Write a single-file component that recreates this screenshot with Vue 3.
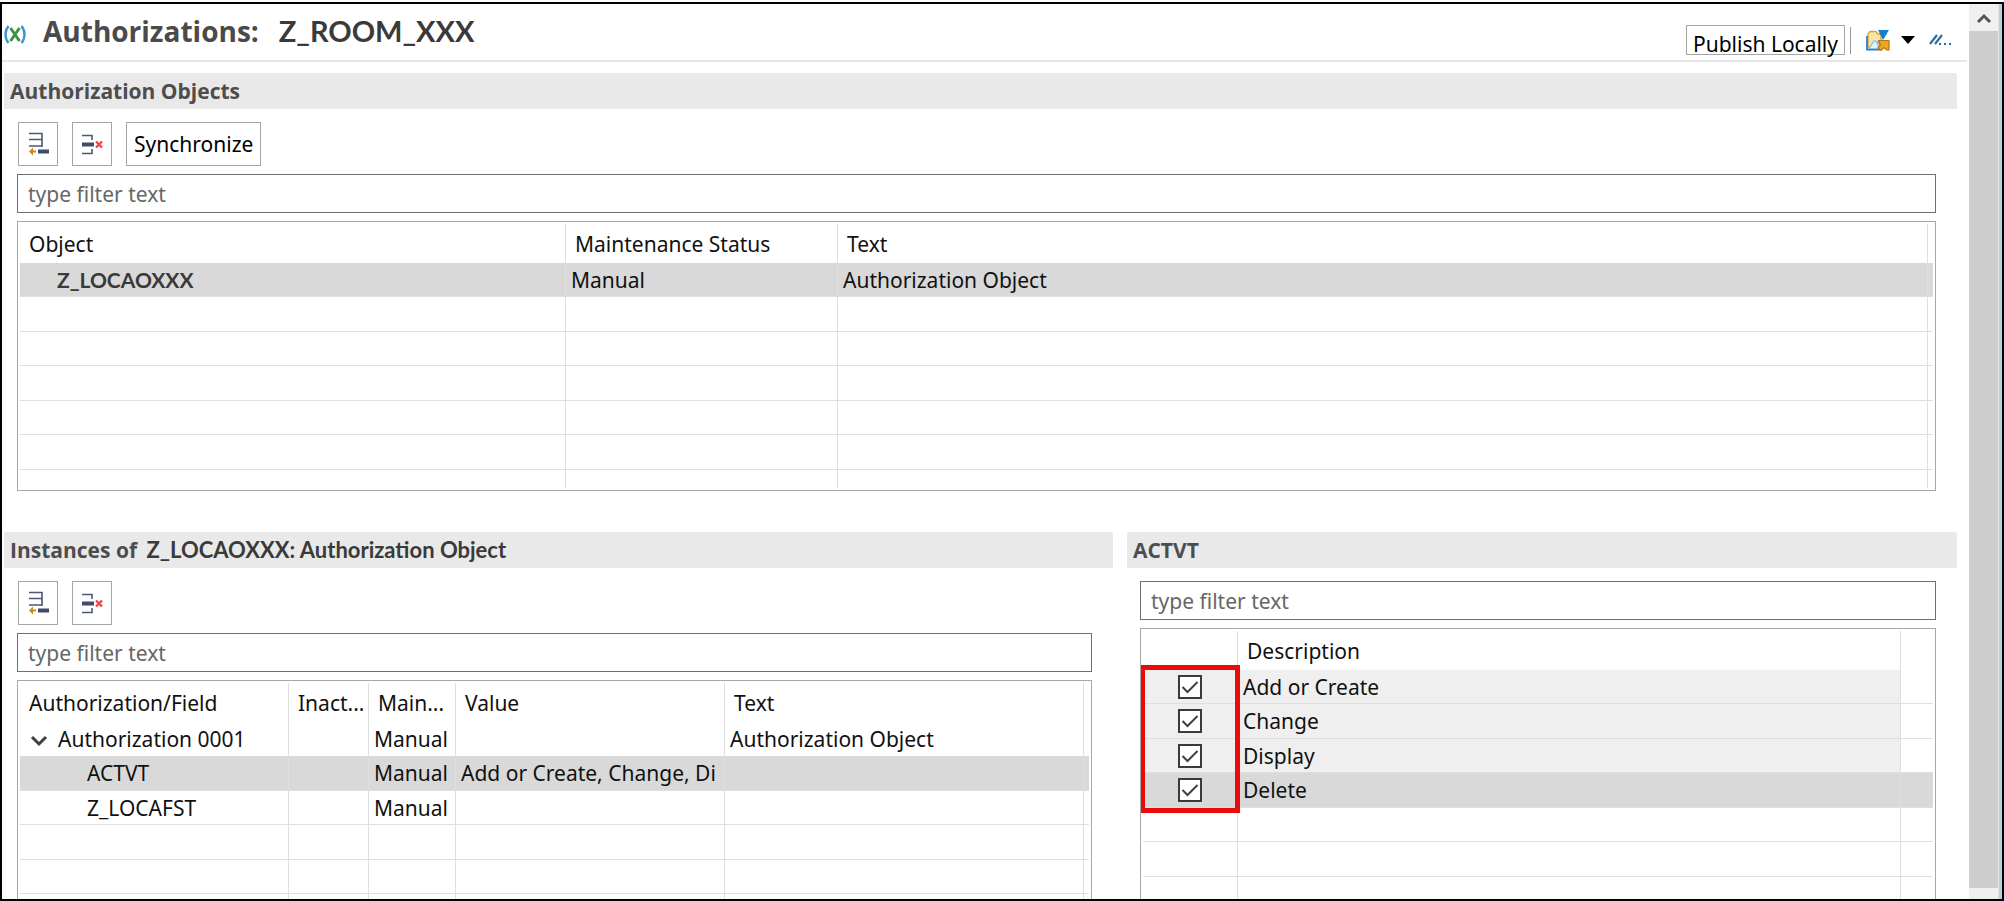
<script setup>
import { ref } from 'vue'

const objects = [
  { name: 'Z_LOCAOXXX', status: 'Manual', text: 'Authorization Object' },
]
const objectFillers = 5

const instances = [
  { name: 'Authorization 0001', level: 0, status: 'Manual', value: '', text: 'Authorization Object' },
  { name: 'ACTVT', level: 1, status: 'Manual', value: 'Add or Create, Change, Di', text: '', selected: true },
  { name: 'Z_LOCAFST', level: 1, status: 'Manual', value: '', text: '' },
]
const instanceFillers = 3

const activities = ref([
  { id: 'create', label: 'Add or Create', checked: true },
  { id: 'change', label: 'Change', checked: true },
  { id: 'display', label: 'Display', checked: true },
  { id: 'delete', label: 'Delete', checked: true, selected: true },
])
const activityFillers = 3
</script>

<template>
  <div class="window">
    <main class="editor">
      <header class="titlebar">
        <svg class="logo" width="22" height="20" viewBox="0 0 22 20" fill="none" aria-hidden="true">
          <path d="M4.500 1C0.500 6 0.500 13 4.500 18M17.500 1C21.500 6 21.500 13 17.500 18" stroke="#3f93d6" stroke-width="2.400" />
          <path d="M6.500 3L15.500 16M15.500 3L6.500 16" stroke="#3c9147" stroke-width="3" />
        </svg>
        <h1>Authorizations:<span class="name">Z_ROOM_XXX</span></h1>
        <div class="actions">
          <button type="button" class="publish">Publish Locally</button>
          <span class="divider"></span>
          <button type="button" class="plain share" aria-label="Share">
            <svg width="24" height="23" viewBox="0 0 24 23" aria-hidden="true">
              <path d="M2 18V5L4 2.500H10L12 5H15V18Z" fill="#fbe3a6" stroke="#d9a441" stroke-width="1.400" />
              <path d="M1 7V20.500H14" fill="none" stroke="#2a84c4" stroke-width="1.800" />
              <path d="M2 19.500L8 11L14 13V19.500Z" fill="#8cc4f0" />
              <path d="M4 19L9 12L13 19Z" fill="#e8f3fc" />
              <path d="M12 1H23L17 11Z" fill="#0f7fd0" />
              <path d="M12.500 11.500H23V21H20.500L18 18.500L15 21.500L12 18.500L14.500 16Z" fill="#efa51c" stroke="#b87708" stroke-width="1.200" />
            </svg>
          </button>
          <button type="button" class="plain menu" aria-label="Share menu">
            <svg width="14" height="8" viewBox="0 0 14 8" aria-hidden="true"><path d="M0 0H14L7 8Z" fill="#000" /></svg>
          </button>
          <button type="button" class="plain" aria-label="More">
            <svg width="23" height="12" viewBox="0 0 23 12" aria-hidden="true">
              <path d="M1 10L8 1M6 10L13 1" stroke="#2f6f9f" stroke-width="2.200" />
              <path d="M10 9h2v2h-2zM15 9h2v2h-2zM20 9h2v2h-2z" fill="#2f6f9f" />
            </svg>
          </button>
        </div>
      </header>

      <section class="objects">
        <h2>Authorization Objects</h2>
        <div class="body">
          <div class="tools">
            <button type="button" class="tool" aria-label="Add object">
              <svg width="22" height="24" viewBox="0 0 22 24" aria-hidden="true">
                <path d="M2 1.500H15V15M2 7.500H15M2 14H15" fill="none" stroke="#4a5875" stroke-width="1.600" />
                <path d="M11 17.500H22V21.500H11Z" fill="#3e4c69" />
                <path d="M2 19.500L6 15.500V18.500H9V20.500H6V23.500Z" fill="#c98a1b" />
              </svg>
            </button>
            <button type="button" class="tool" aria-label="Remove object">
              <svg width="22" height="24" viewBox="0 0 22 24" aria-hidden="true">
                <path d="M1 3.500H11V8M11 17V21.500H1" fill="none" stroke="#4a5875" stroke-width="1.600" />
                <path d="M1 10.500H13V14.500H1Z" fill="#3e4c69" />
                <path d="M15 9.500L21 15.500M21 9.500L15 15.500" stroke="#f0454b" stroke-width="2.400" />
              </svg>
            </button>
            <button type="button" class="tool wide">Synchronize</button>
          </div>
          <input class="filter" type="text" placeholder="type filter text" aria-label="Filter authorization objects" />
          <div class="grid">
            <table>
              <colgroup><col class="c-object" /><col class="c-maint" /><col /><col class="c-tail" /></colgroup>
              <thead>
                <tr><th>Object</th><th>Maintenance Status</th><th>Text</th><th></th></tr>
              </thead>
              <tbody>
                <tr v-for="o in objects" :key="o.name" class="selected">
                  <td class="objname">{{ o.name }}</td><td>{{ o.status }}</td><td>{{ o.text }}</td><td></td>
                </tr>
                <tr v-for="n in objectFillers" :key="n"><td></td><td></td><td></td><td></td></tr>
                <tr class="partial"><td></td><td></td><td></td><td></td></tr>
              </tbody>
            </table>
          </div>
        </div>
      </section>

      <div class="lower">
        <section>
          <h2>Instances of <span class="name">Z_LOCAOXXX: Authorization Object</span></h2>
          <div class="body">
            <div class="tools">
              <button type="button" class="tool" aria-label="Add instance">
                <svg width="22" height="24" viewBox="0 0 22 24" aria-hidden="true">
                  <path d="M2 1.500H15V15M2 7.500H15M2 14H15" fill="none" stroke="#4a5875" stroke-width="1.600" />
                  <path d="M11 17.500H22V21.500H11Z" fill="#3e4c69" />
                  <path d="M2 19.500L6 15.500V18.500H9V20.500H6V23.500Z" fill="#c98a1b" />
                </svg>
              </button>
              <button type="button" class="tool" aria-label="Remove instance">
                <svg width="22" height="24" viewBox="0 0 22 24" aria-hidden="true">
                  <path d="M1 3.500H11V8M11 17V21.500H1" fill="none" stroke="#4a5875" stroke-width="1.600" />
                  <path d="M1 10.500H13V14.500H1Z" fill="#3e4c69" />
                  <path d="M15 9.500L21 15.500M21 9.500L15 15.500" stroke="#f0454b" stroke-width="2.400" />
                </svg>
              </button>
            </div>
            <input class="filter" type="text" placeholder="type filter text" aria-label="Filter instances" />
            <div class="grid">
              <table>
                <colgroup>
                  <col class="c-field" /><col class="c-inact" /><col class="c-main" /><col class="c-value" /><col /><col class="c-tail" />
                </colgroup>
                <thead>
                  <tr><th>Authorization/Field</th><th>Inact...</th><th>Main...</th><th>Value</th><th>Text</th><th></th></tr>
                </thead>
                <tbody>
                  <tr v-for="i in instances" :key="i.name" :class="{ selected: i.selected, parent: i.level === 0 }">
                    <td :class="'level' + i.level">
                      <button v-if="i.level === 0" type="button" class="plain twisty" aria-label="Collapse">
                        <svg width="18" height="12" viewBox="0 0 18 12" aria-hidden="true">
                          <path d="M2 2L9 9L16 2" fill="none" stroke="#404040" stroke-width="3" />
                        </svg>
                      </button>{{ i.name }}
                    </td>
                    <td></td><td>{{ i.status }}</td><td>{{ i.value }}</td><td>{{ i.text }}</td><td></td>
                  </tr>
                  <tr v-for="n in instanceFillers" :key="n"><td></td><td></td><td></td><td></td><td></td><td></td></tr>
                </tbody>
              </table>
            </div>
          </div>
        </section>

        <section>
          <h2>ACTVT</h2>
          <div class="body">
            <input class="filter" type="text" placeholder="type filter text" aria-label="Filter activities" />
            <div class="grid">
              <table>
                <colgroup><col class="c-check" /><col /><col class="c-rest" /></colgroup>
                <thead>
                  <tr><th></th><th>Description</th><th></th></tr>
                </thead>
                <tbody>
                  <tr v-for="a in activities" :key="a.id" :class="a.selected ? 'selected' : 'shaded'">
                    <td class="check"><input :id="a.id" v-model="a.checked" type="checkbox" /></td>
                    <td><label :for="a.id">{{ a.label }}</label></td>
                    <td></td>
                  </tr>
                  <tr v-for="n in activityFillers" :key="n"><td></td><td></td><td></td></tr>
                </tbody>
              </table>
              <div class="highlight"></div>
            </div>
          </div>
        </section>
      </div>
    </main>

    <aside class="scrollbar">
      <button type="button" class="plain up" aria-label="Scroll up">
        <svg width="16" height="12" viewBox="0 0 16 12" aria-hidden="true">
          <path d="M2 10L8 4L14 10" fill="none" stroke="#555" stroke-width="3" />
        </svg>
      </button>
      <div class="thumb"></div>
    </aside>
  </div>
</template>

<style>
body {
  margin: 0;
  padding-top: 2px;
  background: #fff;
}
</style>

<style scoped>
* {
  box-sizing: border-box;
}

.window {
  display: flex;
  height: calc(100vh - 2px);
  overflow: hidden;
  border: 2px solid #000;
  font-family: "Noto Sans", "Open Sans", sans-serif;
  font-size: 21px;
  line-height: 28px;
  color: #111;
  background: #fff;
}

.editor {
  flex: 1;
  min-width: 0;
  display: flex;
  flex-direction: column;
}

.titlebar {
  display: flex;
  align-items: center;
  height: 58px;
  margin-right: 2px;
  padding: 0 15px 2px 2px;
  border-bottom: 2px solid #e6e6e6;
}

.logo {
  margin-top: 8px;
}

h1 {
  margin: 0 0 0 17px;
  font-family: "Open Sans", "Noto Sans", sans-serif;
  font-size: 28px;
  line-height: 40px;
  font-weight: 700;
  color: #4a4a4a;
  white-space: nowrap;
}

.name {
  font-family: Lato, "Open Sans", sans-serif;
  font-weight: 700;
  color: #3a3a3a;
}

h1 .name {
  margin-left: 20px;
  font-size: 29px;
}

.actions {
  display: flex;
  align-items: center;
  margin: 18px 0 0 auto;
}

button {
  font: inherit;
  color: #000;
  white-space: nowrap;
  cursor: pointer;
}

.plain {
  display: flex;
  padding: 0;
  border: 0;
  background: none;
}

.publish {
  height: 30px;
  padding: 4px 6px 0;
  border: 1px solid #a6a6a6;
  background: #fff;
}

.divider {
  width: 1px;
  height: 27px;
  margin: 0 15px 0 5px;
  background: #999;
}

.share {
  margin-right: 11px;
}

.menu {
  margin-right: 14px;
}

section {
  display: flex;
  flex-direction: column;
  min-width: 0;
  min-height: 0;
}

.objects {
  margin: 11px 12px 0 2px;
}

h2 {
  height: 36px;
  margin: 0;
  padding: 0 6px;
  font-family: "Open Sans", "Noto Sans", sans-serif;
  font-size: 21px;
  line-height: 36px;
  font-weight: 700;
  color: #4d4d4d;
  background: #e9e9e9;
  border-radius: 2px 2px 0 0;
  white-space: nowrap;
}

h2 .name {
  margin-left: 4px;
  font-size: 22px;
}

.body {
  flex: 1;
  display: flex;
  flex-direction: column;
  min-height: 0;
  padding: 13px 21px 0 13px;
}

.tools {
  display: flex;
  gap: 14px;
  margin: 0 0 8px 1px;
}

.tool {
  display: flex;
  align-items: center;
  justify-content: center;
  width: 40px;
  height: 44px;
  padding: 0;
  border: 1px solid #a6a6a6;
  background: #fff;
}

.wide {
  width: auto;
  padding: 0 7px;
}

.filter {
  width: 100%;
  height: 39px;
  flex: none;
  margin-bottom: 8px;
  padding: 0 10px;
  border: 1px solid #707070;
  font: inherit;
  background: #fff;
}

.filter::placeholder {
  color: #666;
  opacity: 1;
}

.grid {
  position: relative;
  flex: 1;
  min-height: 0;
  overflow: hidden;
  padding: 2px;
  border: 1px solid #a4a6ac;
}

table {
  width: 100%;
  table-layout: fixed;
  border-collapse: separate;
  border-spacing: 0;
}

.c-object { width: 546px; }
.c-maint { width: 272px; }
.c-tail { width: 5px; }
.c-field { width: 269px; }
.c-inact { width: 80px; }
.c-main { width: 87px; }
.c-value { width: 269px; }
.c-check { width: 95px; }
.c-rest { width: 32px; }

th,
td {
  padding: 0 0 0 5px;
  border-right: 1px solid #dfdfdf;
  text-align: left;
  font-weight: 400;
  white-space: nowrap;
  overflow: hidden;
}

th:last-child,
td:last-child {
  border-right: 0;
}

th {
  height: 39px;
  padding-left: 9px;
}

tbody td {
  height: 35px;
  border-bottom: 1px solid #dfdfdf;
}

tbody tr:nth-child(odd) td {
  height: 34px;
}

tbody tr.partial td {
  height: 18px;
  border-bottom: 0;
}

.parent td {
  border-bottom-color: transparent;
}

.selected td {
  background: #d9d9d9;
}

.shaded td:not(:last-child) {
  background: #efefef;
}

td.objname {
  padding-left: 37px;
  font-family: Lato, "Open Sans", sans-serif;
  font-size: 21px;
  font-weight: 700;
  color: #3a3a3a;
}

td.level0 {
  padding-left: 10px;
}

td.level1 {
  padding-left: 67px;
}

.twisty {
  display: inline-flex;
  margin-right: 10px;
}

.lower {
  flex: 1;
  min-height: 0;
  display: grid;
  grid-template-columns: 1109fr 830fr;
  grid-template-rows: minmax(0, 1fr);
  gap: 14px;
  margin: 41px 12px 0 2px;
}

.lower .grid {
  border-bottom: 0;
}

.check {
  padding: 0;
  text-align: center;
}

.check input {
  appearance: none;
  display: block;
  width: 24px;
  height: 24px;
  margin: 0 auto;
  border: 2px solid #3a3a3a;
  background: #fff;
}

.check input:checked {
  background: #fff url("data:image/svg+xml,%3Csvg xmlns='http://www.w3.org/2000/svg' viewBox='0 0 20 20'%3E%3Cpath d='M2.500 10L7.500 15L17.500 5' fill='none' stroke='%23404040' stroke-width='2'/%3E%3C/svg%3E") center / 20px 20px no-repeat;
}

.highlight {
  position: absolute;
  top: 36px;
  left: -1px;
  width: 100px;
  height: 148px;
  border: 5px solid #ea0b0b;
  pointer-events: none;
}

.scrollbar {
  display: flex;
  flex-direction: column;
  width: 33px;
  padding: 0 4px 11px 0;
  border-right: 3px solid #b9d0df;
  background: linear-gradient(to right, #f0f0f0 29px, #e4e4e4 29px);
}

.up {
  align-items: center;
  justify-content: center;
  width: 29px;
  height: 27px;
}

.thumb {
  flex: 1;
  width: 29px;
  background: #cdcdcd;
}
</style>
